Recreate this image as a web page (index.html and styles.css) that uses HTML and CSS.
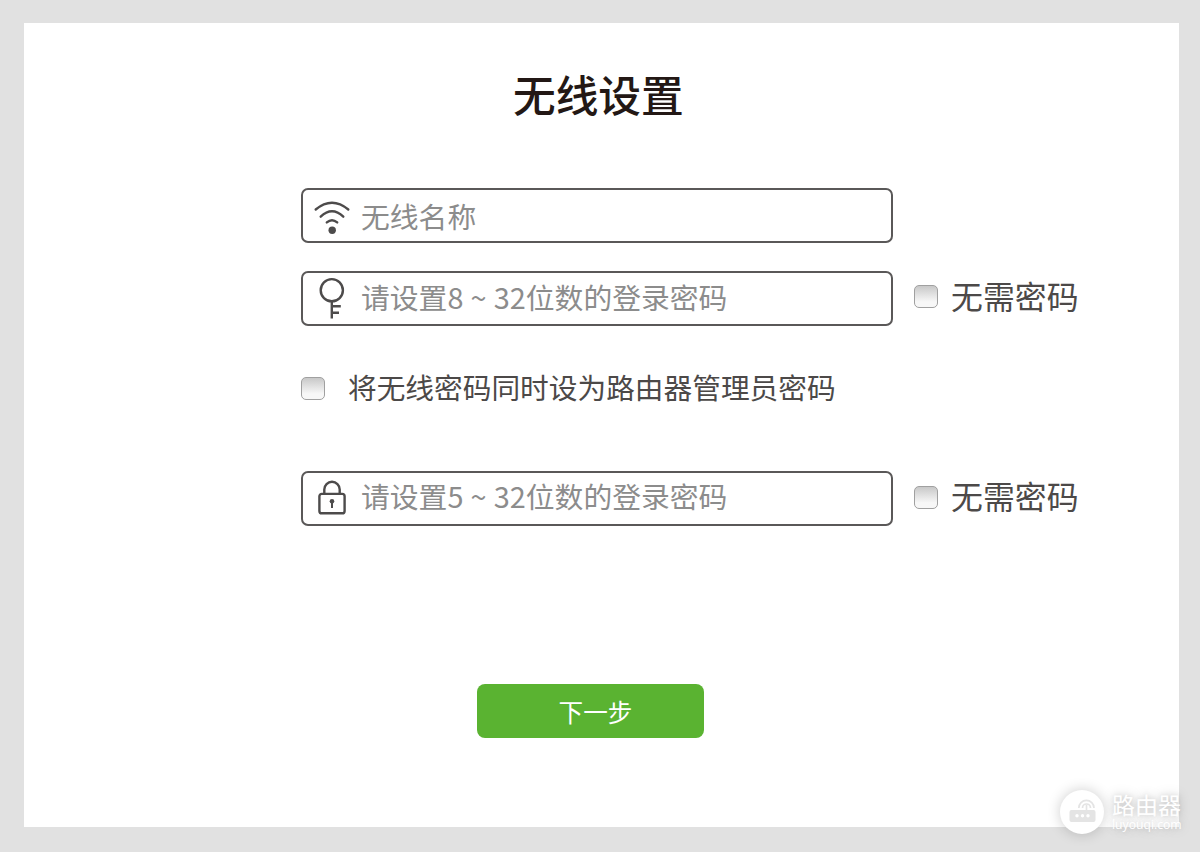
FILE: index.html
```html
<!DOCTYPE html>
<html lang="zh-CN">
<head>
<meta charset="utf-8">
<title>无线设置</title>
<link rel="stylesheet" href="styles.css">
</head>
<body>
<main class="panel">
  <h1 class="title">无线设置</h1>
  <form class="form">
    <div class="row row-name">
      <label class="field">
        <svg class="icon" viewBox="0 0 40 44" fill="none" stroke="#4d4b4b" stroke-width="2.4" stroke-linecap="round">
          <path d="M3.7 15.5Q20 2 36.3 15.5M8.7 22.7Q20 12 31.3 22.7M14.8 28.4Q20 23.9 25.2 28.4"/>
          <circle cx="20.2" cy="36.3" r="3.7" fill="#4d4b4b" stroke="none"/>
        </svg>
        <span class="hint">无线名称</span>
      </label>
    </div>
    <div class="row row-key">
      <label class="field">
        <svg class="icon" viewBox="0 0 40 44" fill="none" stroke="#4d4b4b" stroke-width="2.4">
          <circle cx="19.8" cy="13.2" r="11.1"/>
          <path d="M19.8 24.4V41.5M19.8 29.3H28.8M19.8 35.8H27"/>
        </svg>
        <span class="hint">请设置8 ~ 32位数的登录密码</span>
      </label>
      <span class="box"></span>
      <span class="option">无需密码</span>
    </div>
    <div class="row row-same">
      <span class="box"></span>
      <span class="same">将无线密码同时设为路由器管理员密码</span>
    </div>
    <div class="row row-lock">
      <label class="field">
        <svg class="icon" viewBox="0 0 40 44" fill="none" stroke="#4d4b4b" stroke-width="2.4">
          <rect x="7.4" y="16.9" width="25.2" height="19.4" rx="2.4"/>
          <path d="M12.3 16.8V12.5a7.7 7.7 0 0 1 15.4 0V16.8"/>
          <path d="M20 24V31" stroke-width="2"/>
          <circle cx="20" cy="24.3" r="2.3" fill="#4d4b4b" stroke="none"/>
        </svg>
        <span class="hint">请设置5 ~ 32位数的登录密码</span>
      </label>
      <span class="box"></span>
      <span class="option">无需密码</span>
    </div>
    <button class="next" type="button">下一步</button>
  </form>
</main>
<aside class="mark">
  <span class="disc">
    <svg width="44" height="44" viewBox="0 0 44 44" fill="none" stroke="#e4e4e4" stroke-width="1.7">
      <rect x="9.5" y="20" width="26" height="12" rx="2" fill="#e4e4e4" stroke="none"/>
      <path d="M26.5 22V15M18.8 18a7.6 7.6 0 0 1 15.2 0M22.5 18a4 4 0 0 1 8 0"/>
      <g fill="#fff" stroke="none"><circle cx="17" cy="25.8" r="1.7"/><circle cx="22.5" cy="25.8" r="1.7"/><circle cx="28" cy="25.8" r="1.7"/></g>
    </svg>
  </span>
  <span class="words"><span class="brand">路由器</span><span class="domain">luyouqi.com</span></span>
</aside>
</body>
</html>
```
FILE: styles.css
```css
* { box-sizing: border-box; }
body {
  margin: 0;
  width: 1200px;
  height: 852px;
  padding: 23px 21px 25px 24px;
  background: #e1e1e1;
  font-family: "Noto Sans CJK SC", sans-serif;
  overflow: hidden;
  position: relative;
}
.panel { height: 804px; background: #fff; padding-top: 40px; }
.title {
  margin: 0 0 0 489px;
  font-size: 42.7px;
  line-height: 60px;
  font-weight: 500;
  color: #231815;
  white-space: nowrap;
}
.form { margin: 65px 0 0 277px; }
.row { display: flex; align-items: center; white-space: nowrap; }
.field {
  width: 592px;
  height: 55px;
  flex: none;
  border: 2px solid #5a5858;
  border-radius: 7px;
  display: flex;
  align-items: center;
  padding-left: 9px;
  background: #fff;
}
.icon { width: 40px; height: 44px; flex: none; }
.hint {
  margin-left: 9px;
  padding-bottom: 4px;
  font-size: 28.8px;
  line-height: 40px;
  font-weight: 400;
  color: #8c8c8c;
  word-spacing: .8px;
}
.row-name .hint { padding: 0; }
.row-lock .hint { padding-bottom: 6px; }
.row-key { margin-top: 28px; }
.row-same { margin-top: 41px; height: 42px; }
.row-lock { margin-top: 62px; }
.box {
  width: 24px;
  height: 23px;
  flex: none;
  border: 1px solid #a0a0a0;
  border-radius: 5px;
  background: linear-gradient(#c8c8c8, #f7f7f7 75%);
}
.field + .box { margin: -4px 0 0 21px; }
.row-lock .field + .box { margin-top: -3px; }
.option { margin-left: 13px; padding-bottom: 8px; font-size: 31.9px; line-height: 44px; color: #4c4948; }
.same { margin-left: 23px; padding-bottom: 2px; font-size: 28.7px; line-height: 40px; color: #4c4948; }
.next {
  display: block;
  width: 227px;
  height: 54px;
  margin: 158px 0 0 176px;
  padding: 1px 0 0 10px;
  border: 0;
  border-radius: 8px;
  background: #5ab331;
  color: #fff;
  font: 400 24.6px/53px "Noto Sans CJK SC", sans-serif;
}
.mark {
  position: absolute;
  left: 1060px;
  top: 790px;
  display: flex;
  align-items: center;
  gap: 8px;
  color: #fff;
}
.disc {
  width: 44px;
  height: 44px;
  border-radius: 50%;
  background: #fff;
  box-shadow: 0 0 14px rgba(0, 0, 0, .2);
}
.disc svg { display: block; }
.words { display: flex; flex-direction: column; margin-top: -2px; text-shadow: 0 0 12px rgba(0, 0, 0, .25), 0 0 5px rgba(0, 0, 0, .12); }
.brand { font-size: 23px; line-height: 27px; font-weight: 400; }
.domain { font: 12.2px/13px "Open Sans", sans-serif; }
```
